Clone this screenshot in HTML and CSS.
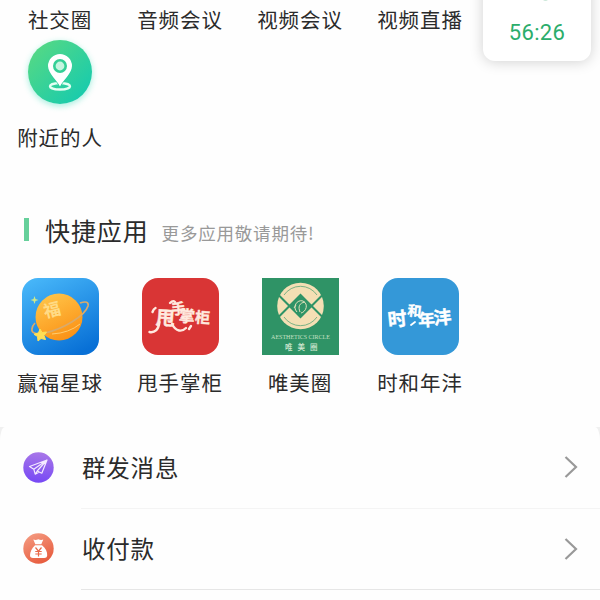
FILE: index.html
```
<!DOCTYPE html>
<html lang="zh-CN">
<head>
    <meta charset="UTF-8">
    <meta name="viewport" content="width=device-width, initial-scale=1.0">
    <title>快捷应用</title>
    <link rel="stylesheet" href="styles.css">
</head>
<body>
    <main class="page">
        <section class="services">
            <div class="label-row">
                <span class="label">社交圈</span>
                <span class="label">音频会议</span>
                <span class="label">视频会议</span>
                <span class="label">视频直播</span>
            </div>
            <div class="nearby">
                <div class="nearby-icon">
                    <svg width="64" height="64" viewBox="0 0 64 64">
                        <ellipse cx="32" cy="46.3" rx="10" ry="3.2" fill="none" stroke="#e4fff3" stroke-width="2.4"/>
                        <path d="M32 48C29 41 20 34 20 26a12 12 0 0 1 24 0c0 8-9 15-12 22z" fill="#25cb9b"/>
                        <path d="M32 46.5C29.5 41 20 33.5 20 26a12 12 0 0 1 24 0c0 7.500-9.500 15-12 20.500z" fill="#fff"/>
                        <circle cx="32" cy="26" r="5.700" fill="#c6f5e0" stroke="#35cf96" stroke-width="2.600"/>
                    </svg>
                </div>
                <span class="label">附近的人</span>
            </div>
        </section>

        <section class="apps">
            <div class="section-title">
                <h2>快捷应用</h2>
                <span class="hint">更多应用敬请期待!</span>
            </div>
            <div class="app-grid">
                <div class="app">
                    <svg class="app-icon" viewBox="0 0 77 77">
                        <defs>
                            <linearGradient id="sky" x1="0.2" y1="0" x2="0.7" y2="1">
                                <stop offset="0" stop-color="#46b5f8"/>
                                <stop offset="1" stop-color="#0870d6"/>
                            </linearGradient>
                            <linearGradient id="planet" x1="0.2" y1="0" x2="0.7" y2="1">
                                <stop offset="0" stop-color="#ffc64a"/>
                                <stop offset="1" stop-color="#fb9014"/>
                            </linearGradient>
                        </defs>
                        <rect width="77" height="77" fill="url(#sky)"/>
                        <circle cx="37" cy="39" r="23.500" fill="url(#planet)"/>
                        <text x="30" y="38" class="planet-text" transform="rotate(-14 30 32)">福</text>
                        <path d="M30 56q17-1 28-10" fill="none" stroke="#ffcd70" stroke-width="1"/>
                        <path d="M58 25c6-2 9-1 8 3-3 10-25 23-43 27-8 2-14 0-13-4 0-2 1-4 3-6" fill="none" stroke="#d9aa6b" stroke-width="1.700"/>
                        <path d="M18 51l2 3.500 4.500-.5-2.500 3.500 1.500 4-4.500-1-3 2.500-.5-4.500-3.500-2.200 4.500-1.500z" fill="#ffdf55" stroke="#ffdf55" stroke-linejoin="round"/>
                        <path d="M12.500 18l1 3 3 1-3 1-1 3-1-3-3-1 3-1z" fill="#cce88c"/>
                    </svg>
                    <span class="label">赢福星球</span>
                </div>
                <div class="app">
                    <svg class="app-icon" viewBox="0 0 77 77">
                        <rect width="77" height="77" fill="#d93535"/>
                        <g class="brush brush-pink">
                            <text x="14" y="47" font-size="19" transform="rotate(4 24 40)">甩</text>
                            <text x="29" y="36" font-size="14.500" transform="rotate(-6 36 30)">手</text>
                            <text x="37" y="44" font-size="16" transform="rotate(5 46 37)">掌</text>
                            <text x="53" y="45" font-size="15" transform="rotate(4 60 40)">柜</text>
                        </g>
                        <path d="M7.500 54c5 1 9-2 10-10M30 46c4 8 10 8 14 4M47 51l2-3M10.500 34q1-3 3-4M28 25q3-3 5-1" fill="none" stroke="#ffe9df" stroke-width="2.400" stroke-linecap="round"/>
                    </svg>
                    <span class="label">甩手掌柜</span>
                </div>
                <div class="app">
                    <svg class="app-icon square" viewBox="0 0 77 77">
                        <rect width="77" height="77" fill="#2f9366"/>
                        <circle cx="38.500" cy="28" r="23.300" fill="#f4dfb4"/>
                        <path d="M22 17a20 20 0 0 1 33 0M22 39a20 20 0 0 0 33 0" fill="none" stroke="#5aa577" stroke-width="0.800"/>
                        <path d="M17 17.500L38.500 39 60 17.500M17 38.500L38.500 17 60 38.500" fill="none" stroke="#2f9366" stroke-width="2"/>
                        <path d="M38.500 16.500L50 28 38.500 39.500 27 28z" fill="#2f9366"/>
                        <path d="M35 34c-5-5 0-13 6-11 6 3 3 11-2 12M43 24c-6 1-7 5-5 10M34 27l-2 3" fill="none" stroke="#dfe0ba" stroke-width="1"/>
                        <text x="38.500" y="61" class="circle-name">AESTHETICS CIRCLE</text>
                        <text x="23" y="72" class="circle-cn">唯美圈</text>
                    </svg>
                    <span class="label">唯美圈</span>
                </div>
                <div class="app">
                    <svg class="app-icon" viewBox="0 0 77 77">
                        <rect width="77" height="77" fill="#3498d8"/>
                        <g class="brush brush-white">
                            <text x="5.500" y="48" font-size="19" transform="rotate(-6 15 40)">时</text>
                            <text x="25.500" y="38" font-size="14" transform="rotate(6 33 32)">和</text>
                            <text x="36" y="48" font-size="17" transform="rotate(-4 44 42)">年</text>
                            <text x="51.500" y="46" font-size="18" transform="rotate(-6 60 40)">沣</text>
                        </g>
                        <path d="M29 47l4-3" stroke="#fff" stroke-width="1.800" stroke-linecap="round"/>
                    </svg>
                    <span class="label">时和年沣</span>
                </div>
            </div>
        </section>

        <div class="list-wrap">
            <ul class="list">
                <li class="list-item">
                    <svg class="item-icon" viewBox="0 0 31 31">
                        <defs>
                            <linearGradient id="violet" x1="0.5" y1="0" x2="0.4" y2="1">
                                <stop offset="0" stop-color="#a877e8"/>
                                <stop offset="1" stop-color="#7648f5"/>
                            </linearGradient>
                        </defs>
                        <circle cx="15.500" cy="15.500" r="15.200" fill="url(#violet)"/>
                        <path d="M24 8L6.500 14.500l4.300 2.700L24 8l-5.200 13.200-4.600-2.200L24 8M10.800 17.200l1.400 5 2-3.200M12.200 22.200l4-2.300" fill="none" stroke="#f4eaff" stroke-width="1.200" stroke-linejoin="round"/>
                    </svg>
                    <div class="item-body">
                        <span class="item-text">群发消息</span>
                        <svg class="arrow" width="14" height="24" viewBox="0 0 14 24">
                            <path d="M1.500 2L12 12 1.500 22" fill="none" stroke="#999" stroke-width="2.200"/>
                        </svg>
                    </div>
                </li>
                <li class="list-item">
                    <svg class="item-icon" viewBox="0 0 31 31">
                        <defs>
                            <linearGradient id="coral" x1="0.2" y1="0" x2="0.7" y2="1">
                                <stop offset="0" stop-color="#f49a80"/>
                                <stop offset="1" stop-color="#e75a3c"/>
                            </linearGradient>
                        </defs>
                        <circle cx="15.500" cy="15.500" r="15.200" fill="url(#coral)"/>
                        <path d="M10.300 6.500q2.600 1 5-.3 2.600 1.300 5 .3l-2 4.700h-6zM12 12.300h7c3.500 3 5.500 6.500 5.200 10.200-.2 1.700-1.200 2.500-3 2.500H10c-2 0-3-1-3-2.700 0-3.500 2-7 5-10z" fill="#fff"/>
                        <path d="M12.500 14.500l3 3.700 3-3.700M15.500 18v5.500M12.300 18.500h6.400M12.300 21h6.400" fill="none" stroke="#e9694a" stroke-width="1.200"/>
                    </svg>
                    <div class="item-body">
                        <span class="item-text">收付款</span>
                        <svg class="arrow" width="14" height="24" viewBox="0 0 14 24">
                            <path d="M1.500 2L12 12 1.500 22" fill="none" stroke="#999" stroke-width="2.200"/>
                        </svg>
                    </div>
                </li>
            </ul>
        </div>
    </main>

    <!-- floating call timer -->
    <div class="call-timer">56:26</div>
</body>
</html>
```

FILE: styles.css
```
* {
    box-sizing: border-box;
    margin: 0;
    padding: 0;
}

body {
    font-family: "Noto Sans CJK SC", sans-serif;
    background: #fefefe;
    color: #2b2b2b;
    overflow: hidden;
}

.page {
    width: 600px;
    height: 600px;
    overflow: hidden;
}

.label {
    display: block;
    text-align: center;
    font-size: 20.5px;
    line-height: 28px;
    letter-spacing: 0.9px;
    font-weight: 400;
    white-space: nowrap;
}

.services {
    height: 205px;
    padding-top: 5px;
}

.label-row,
.app-grid {
    display: grid;
    grid-template-columns: repeat(5, 120px);
}

.nearby {
    width: 120px;
    padding-top: 7px;
    display: flex;
    flex-direction: column;
    align-items: center;
    gap: 19px;
}

.nearby-icon {
    width: 64px;
    height: 64px;
    border-radius: 50%;
    background: linear-gradient(135deg, #5cda80, #0fc9b3);
    box-shadow: 0 2px 6px rgba(30, 215, 175, 0.4);
}

.apps {
    height: 222px;
    padding-top: 7px;
}

.section-title {
    display: flex;
    align-items: center;
    height: 36px;
    padding-left: 24px;
}

.section-title::before {
    content: "";
    width: 5px;
    height: 23px;
    margin: -1px 16px 0 0;
    background: #66d09b;
}

.section-title h2 {
    font-size: 25px;
    font-weight: 400;
    line-height: 36px;
    letter-spacing: 0.9px;
    margin-top: -1px;
}

.hint {
    margin: 6px 0 0 13px;
    font-size: 17.5px;
    line-height: 26px;
    letter-spacing: 0.8px;
    color: #999;
}

.app-grid {
    padding-top: 30px;
}

.app {
    display: flex;
    flex-direction: column;
    align-items: center;
    gap: 13px;
}

.app-icon {
    width: 77px;
    height: 77px;
    border-radius: 16px;
}

.app-icon.square {
    border-radius: 0;
}

.planet-text {
    font-size: 17px;
    font-weight: 700;
    text-anchor: middle;
    fill: #ffdb86;
}

.brush {
    font-weight: 700;
    stroke-width: 0.4px;
    stroke-linejoin: round;
}

.brush-pink {
    fill: #ffe9df;
    stroke: #ffe9df;
}

.brush-white {
    fill: #fff;
    stroke: #fff;
}

.circle-name {
    font-family: "Liberation Serif", serif;
    font-size: 6px;
    text-anchor: middle;
    fill: #c5e0c4;
}

.circle-cn {
    font-size: 7.5px;
    font-weight: 500;
    letter-spacing: 5px;
    fill: #d5ead3;
}

.list-wrap {
    background: #f0f0f0;
}

.list {
    list-style: none;
    background: #fefefe;
    border-radius: 5px 5px 0 0 / 14px 14px 0 0;
    height: 173px;
}

.list-item {
    display: flex;
    align-items: center;
    height: 81.5px;
    padding-left: 22.5px;
}

.item-icon {
    width: 31px;
    height: 31px;
    margin: -1px 27px 0 0;
}

.item-body {
    flex: 1;
    height: 100%;
    display: flex;
    align-items: center;
    justify-content: space-between;
    padding: 0 22px 0 1.5px;
    border-bottom: 1px solid #e6e6e6;
}

.list-item:first-child .item-body {
    border-color: #f4f4f4;
}

.item-text {
    font-size: 23.5px;
    line-height: 34px;
    letter-spacing: 0.8px;
    margin-top: -1px;
}

.call-timer {
    position: absolute;
    top: -40px;
    left: 483px;
    width: 108px;
    height: 101px;
    padding-top: 59px;
    border-radius: 0 0 12px 12px;
    background: #fff;
    box-shadow: 0 1px 14px rgba(0, 0, 0, 0.18);
    font-family: Roboto, sans-serif;
    font-size: 22px;
    line-height: 28px;
    text-align: center;
    letter-spacing: 0.3px;
    color: #2bad6b;
}

/* tail of the phone glyph above the timer */
.call-timer::before {
    content: "";
    position: absolute;
    top: 37px;
    left: 60px;
    width: 5px;
    height: 4px;
    border-radius: 50%;
    background: #cde8da;
}
```
